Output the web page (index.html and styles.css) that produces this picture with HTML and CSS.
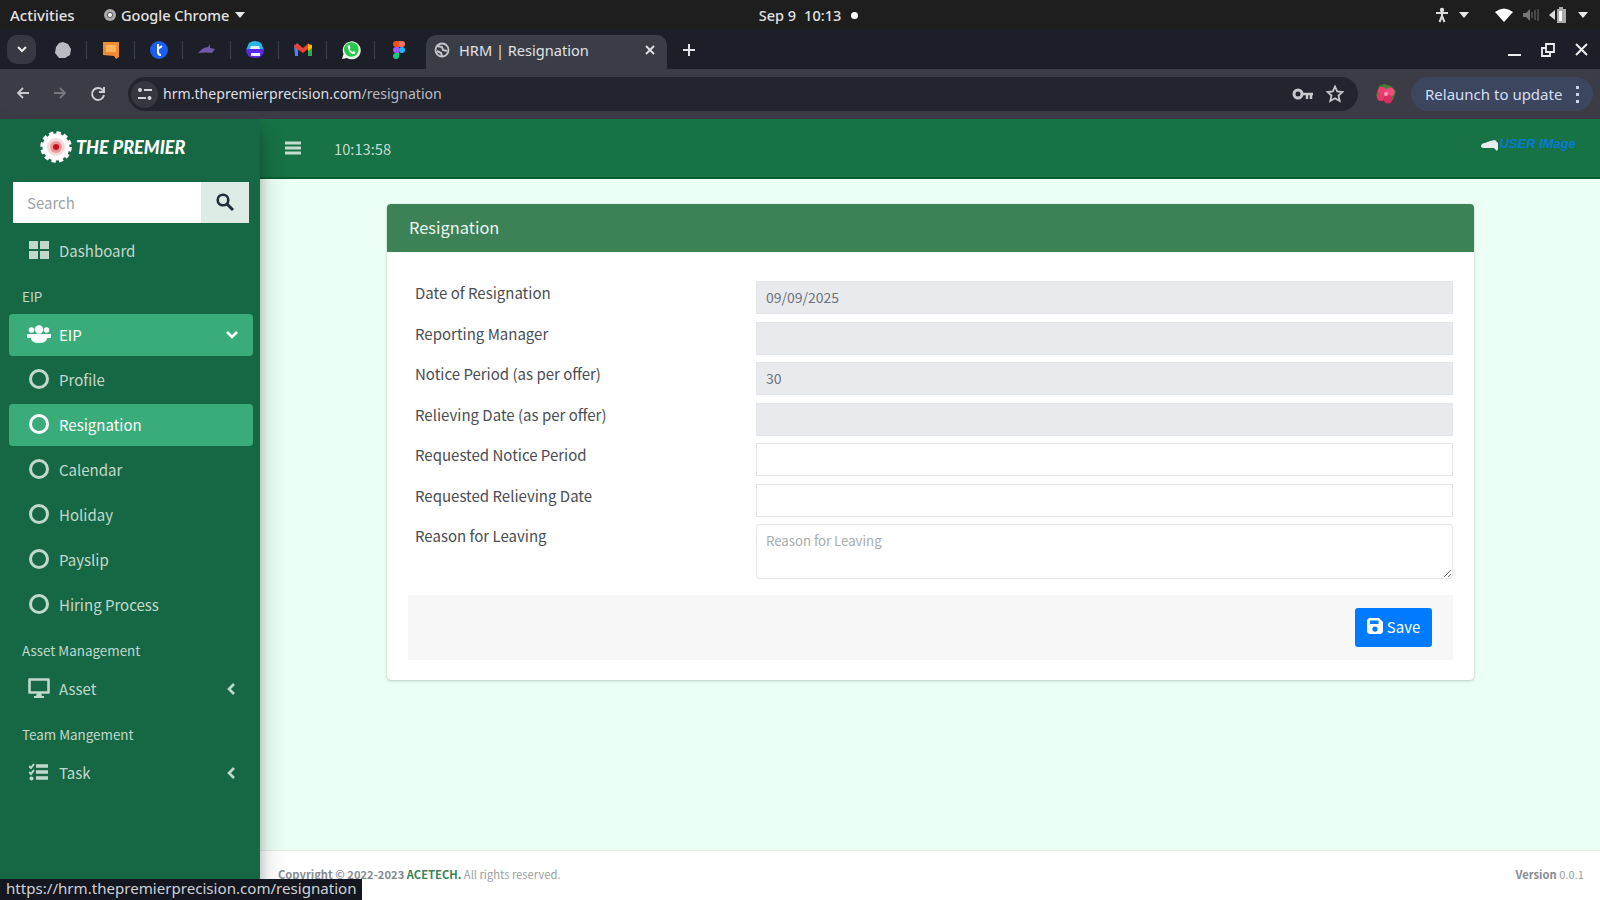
FILE: index.html
```
<!DOCTYPE html>
<html lang="en">
<head>
<meta charset="UTF-8">
<meta name="viewport" content="width=device-width, initial-scale=1.0">
<link rel="stylesheet" href="styles.css">
<title>HRM | Resignation</title>
</head>
<body>

<div class="system-bar">
    <div class="system-left">
        <span class="activities">Activities</span>
        <svg width="14" height="14" viewBox="0 0 14 14"><circle cx="7" cy="7" r="6" fill="#aaa"/><circle cx="7" cy="7" r="2.6" fill="#eee" stroke="#555"/></svg>
        <span class="app-name">Google Chrome</span>
        <i class="caret"></i>
    </div>
    <div class="clock"><span>Sep 9</span><span>10:13</span><i class="dot"></i></div>
    <div class="system-right">
        <svg width="14" height="16" viewBox="0 0 14 16"><circle cx="7" cy="3" r="2.2" fill="#ddd"/><path d="M1 6h12M7 5v5M7 9l-2.5 6M7 9l2.5 6" stroke="#ddd" stroke-width="2" fill="none"/></svg>
        <i class="caret"></i>
        <svg class="wifi" width="18" height="14" viewBox="0 0 18 14"><path d="M0 4Q9-3 18 4L9 14z" fill="#fff"/></svg>
        <svg class="sound" width="16" height="14" viewBox="0 0 16 14"><path d="M0 5h3l4-4v12l-4-4H0z" fill="#777"/><path d="M9 4v6M12 2v10M15 1v12" stroke="#555" stroke-width="1.5"/></svg>
        <svg width="19" height="16" viewBox="0 0 19 16"><path d="M0 8l6-5v10z" fill="#ddd"/><path d="M8 2h2V0h4v2h3v14H8z" fill="#aaa"/><path d="M10 4h3v10h-3z" fill="#fff"/></svg>
        <i class="caret"></i>
    </div>
</div>

<div class="tab-strip">
    <div class="tab-search"><svg width="10" height="7" viewBox="0 0 10 7"><path d="M1 1l4 4 4-4" fill="none" stroke="#eee" stroke-width="2"/></svg></div>
    <div class="pinned-tabs">
        <span class="pinned"><svg width="18" height="18" viewBox="0 0 18 18"><path d="M9 1l5 2 3 5-1 6-5 3H5l-4-5 1-6 3-4z" fill="#b9bbc0"/></svg></span>
        <span class="pinned"><svg width="18" height="18" viewBox="0 0 18 18"><path d="M1 1h16v15l-3 2-2-3-11-1z" fill="#f28a35"/><path d="M4 4h10v7H4z" fill="#ffb45e"/></svg></span>
        <span class="pinned"><svg width="18" height="18" viewBox="0 0 18 18"><circle cx="9" cy="9" r="9" fill="#1c5df2"/><path d="M8 3v8q0 3 3 3M8 8l4-3" stroke="#fff" stroke-width="2" fill="none"/></svg></span>
        <span class="pinned"><svg width="20" height="14" viewBox="0 0 20 14"><path d="M1 10q5-6 10-6l2-3v4l5 1-3 4q-6-1-14 0z" fill="#7157a8"/></svg></span>
        <span class="pinned"><svg width="20" height="18" viewBox="0 0 20 18"><path d="M4 2q6-4 12 0l3 7H1z" fill="#25b8ea"/><path d="M1 8h18q0 9-9 9T1 8z" fill="#572be8"/><path d="M6 5h8l1 3H5zM6 12h9v3H6z" fill="#e9efff"/></svg></span>
        <span class="pinned"><svg width="18" height="14" viewBox="0 0 18 14"><path d="M0 2h4v11H1z" fill="#4285f4"/><path d="M14 2h4v11h-4z" fill="#34a853"/><path d="M0 3l3-3 6 5 6-5v5L9 10 0 4z" fill="#ea4335"/><path d="M14 1l4 1v3l-4 3z" fill="#fbbc04"/></svg></span>
        <span class="pinned"><svg width="20" height="20" viewBox="0 0 20 20"><path d="M1 19l1.5-5A9 9 0 1 1 6 18z" fill="#e9f8eb"/><circle cx="10.300" cy="9.500" r="7.300" fill="#28c64b"/><path d="M6.500 6l2-1 1 3-1 1q1 2 3 3l1-1 2 1-1 2q-5 1-7-8z" fill="#fff"/></svg></span>
        <span class="pinned"><svg width="12" height="18" viewBox="0 0 12 18"><path d="M3 0h3v6H3a3 3 0 0 1 0-6z" fill="#f24e1e"/><path d="M6 0h3a3 3 0 0 1 0 6H6z" fill="#ff7262"/><path d="M3 6h3v6H3a3 3 0 0 1 0-6z" fill="#a259ff"/><circle cx="9" cy="9" r="3" fill="#1abcfe"/><path d="M3 12h3v3a3 3 0 1 1-3-3z" fill="#0acf83"/></svg></span>
    </div>
    <div class="tab">
        <svg width="16" height="16" viewBox="0 0 16 16"><circle cx="8" cy="8" r="6.500" fill="none" stroke="#c5c7ca" stroke-width="1.800"/><path d="M3 4l5 1 1 3 4 1M3 9l4 2 1 3" stroke="#c5c7ca" stroke-width="2" fill="none"/></svg>
        <span class="tab-title">HRM | Resignation</span>
        <svg width="10" height="10" viewBox="0 0 10 10"><path d="M1 1l8 8M9 1L1 9" stroke="#e3e3e6" stroke-width="1.800"/></svg>
    </div>
    <svg class="new-tab" width="12" height="12" viewBox="0 0 12 12"><path d="M6 0v12M0 6h12" stroke="#e3e3e6" stroke-width="2"/></svg>
    <div class="window-buttons">
        <svg width="13" height="14" viewBox="0 0 13 14"><path d="M0 12h13" stroke="#eee" stroke-width="2"/></svg>
        <svg width="14" height="14" viewBox="0 0 14 14"><path d="M5 1h8v8H5zM9 9v4H1V5h4" fill="none" stroke="#eee" stroke-width="1.800"/></svg>
        <svg width="13" height="13" viewBox="0 0 13 13"><path d="M1 1l11 11M12 1L1 12" stroke="#eee" stroke-width="2"/></svg>
    </div>
</div>

<div class="toolbar">
    <div class="nav-buttons">
        <svg width="14" height="14" viewBox="0 0 14 14"><path d="M13 7H2M7 2L2 7l5 5" fill="none" stroke="#c8c9cd" stroke-width="1.800"/></svg>
        <svg width="14" height="14" viewBox="0 0 14 14"><path d="M1 7h11M7 2l5 5-5 5" fill="none" stroke="#777981" stroke-width="1.800"/></svg>
        <svg width="16" height="16" viewBox="0 0 16 16"><path d="M13 4.500A6 6 0 1 0 14 9M9 6h5V1" fill="none" stroke="#d0d1d5" stroke-width="1.900"/></svg>
    </div>
    <div class="omnibox">
        <span class="site-info"><svg width="16" height="14" viewBox="0 0 16 14"><path d="M7 3h8M1 11h8" stroke="#d5d6da" stroke-width="2"/><circle cx="3" cy="3" r="2" fill="#d5d6da"/><circle cx="12.500" cy="11" r="2" fill="#d5d6da"/></svg></span>
        <span class="url"><b>hrm.thepremierprecision.com</b>/resignation</span>
        <svg width="22" height="12" viewBox="0 0 22 12"><circle cx="6" cy="6" r="4" fill="none" stroke="#c8c9cd" stroke-width="3"/><path d="M10 6h11M15 6v5M19 6v5" stroke="#c8c9cd" stroke-width="2.500"/></svg>
        <svg class="star" width="18" height="18" viewBox="0 0 18 18"><path d="M9 1.500l2.200 5 5.300.5-4 3.600 1.200 5.400L9 13.200 4.300 16l1.200-5.400-4-3.600 5.300-.5z" fill="none" stroke="#c8c9cd" stroke-width="1.800"/></svg>
    </div>
    <svg class="profile-pic" width="22" height="22" viewBox="0 0 22 22"><path d="M4 3l5-2 7 2 5 5-3 9H4L1 12z" fill="#4c7b30"/><circle cx="7" cy="8" r="4" fill="#e93f72"/><circle cx="15" cy="9" r="4.500" fill="#f04b7d"/><circle cx="6" cy="14" r="4" fill="#e63a6d"/><circle cx="13" cy="16" r="4.500" fill="#d92e64"/><circle cx="11" cy="11" r="2" fill="#ff9db9"/></svg>
    <div class="relaunch"><span>Relaunch to update</span><svg width="3" height="17" viewBox="0 0 3 17"><path d="M0 0h3v3H0zM0 7h3v3H0zM0 14h3v3H0z" fill="#c9d4ef"/></svg></div>
</div>

<div class="wrapper">
    <aside class="sidebar">
        <div class="brand">
            <svg width="32" height="32" viewBox="0 0 32 32"><circle cx="16" cy="16" r="13.500" fill="#fff"/><circle cx="16" cy="16" r="14" fill="none" stroke="#fff" stroke-width="3.500" stroke-dasharray="4.300 3.030"/><circle cx="16" cy="16" r="9" fill="#f4dada"/><circle cx="16" cy="16" r="6" fill="#e99b9b"/><circle cx="16" cy="16" r="3" fill="#c9101a"/></svg>
            <span>THE PREMIER</span>
        </div>
        <div class="sidebar-search">
            <input type="text" placeholder="Search">
            <button type="button"><svg width="18" height="18" viewBox="0 0 18 18"><circle cx="7" cy="7" r="5.300" fill="none" stroke="#1f2d3d" stroke-width="2.600"/><path d="M11 11l6 6" stroke="#1f2d3d" stroke-width="3"/></svg></button>
        </div>
        <nav>
            <a class="nav-item"><i class="nav-icon"><svg width="20" height="18" viewBox="0 0 20 18"><path d="M0 0h9v8H0zM11 0h9v8h-9zM0 10h9v8H0zM11 10h9v8h-9z" fill="currentColor"/></svg></i><span>Dashboard</span></a>
            <div class="nav-header">EIP</div>
            <a class="nav-item active"><i class="nav-icon"><svg width="24" height="18" viewBox="0 0 24 18"><circle cx="4.500" cy="5" r="2.800" fill="currentColor"/><circle cx="19.500" cy="5" r="2.800" fill="currentColor"/><circle cx="12" cy="4.500" r="4.200" fill="currentColor"/><path d="M0 9h24v4h-4q0 5-8 5t-8-5H0z" fill="currentColor"/></svg></i><span>EIP</span>
                <svg width="12" height="8" viewBox="0 0 12 8"><path d="M1 1l5 5 5-5" fill="none" stroke="currentColor" stroke-width="2.600"/></svg></a>
            <a class="nav-item"><i class="nav-icon circle"></i><span>Profile</span></a>
            <a class="nav-item active"><i class="nav-icon circle"></i><span>Resignation</span></a>
            <a class="nav-item"><i class="nav-icon circle"></i><span>Calendar</span></a>
            <a class="nav-item"><i class="nav-icon circle"></i><span>Holiday</span></a>
            <a class="nav-item"><i class="nav-icon circle"></i><span>Payslip</span></a>
            <a class="nav-item"><i class="nav-icon circle"></i><span>Hiring Process</span></a>
            <div class="nav-header">Asset Management</div>
            <a class="nav-item"><i class="nav-icon"><svg width="22" height="20" viewBox="0 0 22 20"><path d="M1.500 1.500h19v13h-19z" fill="none" stroke="currentColor" stroke-width="2.600" stroke-linejoin="round"/><path d="M9 15h4l1 3h2v2H6v-2h2z" fill="currentColor"/></svg></i><span>Asset</span>
                <svg class="arrow-left" width="8" height="12" viewBox="0 0 8 12"><path d="M7 1L2 6l5 5" fill="none" stroke="currentColor" stroke-width="2.600"/></svg></a>
            <div class="nav-header">Team Mangement</div>
            <a class="nav-item"><i class="nav-icon"><svg width="20" height="18" viewBox="0 0 20 18"><path d="M7 3h12M7 9h12M7 15h12" stroke="currentColor" stroke-width="3.500"/><path d="M0 3l2 2 3-4M0 9l2 2 3-4" fill="none" stroke="currentColor" stroke-width="2"/><circle cx="2.500" cy="15.500" r="2" fill="currentColor"/></svg></i><span>Task</span>
                <svg class="arrow-left" width="8" height="12" viewBox="0 0 8 12"><path d="M7 1L2 6l5 5" fill="none" stroke="currentColor" stroke-width="2.600"/></svg></a>
        </nav>
    </aside>

    <div class="main">
        <header class="navbar">
            <svg width="16" height="14" viewBox="0 0 16 14"><path d="M0 2h16M0 7h16M0 12h16" stroke="#c5dccf" stroke-width="2.800"/></svg>
            <span class="time">10:13:58</span>
            <div class="user">
                <svg width="18" height="14" viewBox="0 0 18 14"><path d="M0 10q0-4 4-4l5-2 5-1 3 3v6l-1 2-3-3H2z" fill="#e8eef0"/></svg>
                <span>USER IMage</span>
            </div>
        </header>

        <main class="content">
            <form class="card">
                <div class="card-header">Resignation</div>
                <div class="card-body">
                    <div class="form-row"><label>Date of Resignation</label><input type="text" value="09/09/2025" disabled></div>
                    <div class="form-row"><label>Reporting Manager</label><input type="text" disabled></div>
                    <div class="form-row"><label>Notice Period (as per offer)</label><input type="text" value="30" disabled></div>
                    <div class="form-row"><label>Relieving Date (as per offer)</label><input type="text" disabled></div>
                    <div class="form-row"><label>Requested Notice Period</label><input type="text"></div>
                    <div class="form-row"><label>Requested Relieving Date</label><input type="text"></div>
                    <div class="form-row"><label>Reason for Leaving</label><textarea placeholder="Reason for Leaving"></textarea></div>
                    <div class="card-footer">
                        <button type="button" class="save"><svg width="16" height="16" viewBox="0 0 16 16"><path fill-rule="evenodd" d="M2 0h10l4 4v10l-2 2H2l-2-2V2zM3 2.500V6h8.500V2.500zM8 8.500a2.600 2.600 0 1 0 .01 0z" fill="#fff"/></svg><span>Save</span></button>
                    </div>
                </div>
            </form>
        </main>

        <footer class="footer">
            <div><b>Copyright © 2022-2023 <span class="company">ACETECH.</span></b> All rights reserved.</div>
            <div><b>Version</b> 0.0.1</div>
        </footer>
    </div>
</div>

<div class="status-url">https://hrm.thepremierprecision.com/resignation</div>

</body>
</html>
```
FILE: styles.css
```
* {
    box-sizing: border-box;
}

body {
    margin: 0;
    width: 1600px;
    height: 900px;
    overflow: hidden;
    display: flex;
    flex-direction: column;
    font-family: "Noto Sans CJK JP", "Noto Sans", sans-serif;
    font-size: 15px;
    color: #212529;
}

svg {
    display: block;
    flex: none;
}

input, textarea, button {
    font-family: inherit;
}

/* Desktop bar */
.system-bar {
    height: 30px;
    background-color: #1e1e1e;
    color: #e2e2e2;
    display: grid;
    grid-template-columns: 1fr auto 1fr;
    align-items: center;
    padding: 0 12px 0 10px;
    font: 500 14.5px/28px "Noto Sans", sans-serif;
}

.system-left, .system-right, .clock {
    display: flex;
    align-items: center;
}

.activities {
    width: 93px;
    font-size: 15px;
}

.app-name {
    margin: 0 6px 0 4px;
}

.clock {
    gap: 8px;
    padding-left: 19px;
}

.dot {
    width: 7px;
    height: 7px;
    margin-left: 2px;
    border-radius: 50%;
    background-color: #fff;
}

.caret {
    border: 5px solid transparent;
    border-top: 6px solid #e8e8e8;
    border-bottom: 0;
}

.system-right {
    justify-content: flex-end;
    gap: 10px;
}

.wifi {
    margin-left: 16px;
}

/* Browser tabs */
.tab-strip {
    height: 39px;
    background-color: #1c1f28;
    display: flex;
    align-items: center;
    padding: 0 12px 0 7px;
}

.tab-search {
    width: 29px;
    height: 29px;
    border-radius: 10px;
    background-color: #373942;
    display: flex;
    align-items: center;
    justify-content: center;
}

.pinned-tabs {
    display: flex;
    width: 390px;
    padding-left: 3px;
}

.pinned {
    width: 48px;
    height: 18px;
    display: flex;
    align-items: center;
    justify-content: center;
    border-right: 1px solid #3d404a;
}

.pinned:last-child {
    border-right: 0;
}

.tab {
    width: 241px;
    height: 34px;
    margin-top: 5px;
    padding: 0 12px 5px 8px;
    border-radius: 10px 10px 0 0;
    background-color: #3b3d46;
    display: flex;
    align-items: center;
}

.tab-title {
    flex: 1;
    margin-left: 9px;
    color: #e0e1e4;
    font: 14.6px/24px "Noto Sans", sans-serif;
}

.new-tab {
    margin-left: 16px;
}

.window-buttons {
    margin-left: auto;
    display: flex;
    gap: 20px;
}

/* Address bar */
.toolbar {
    height: 50px;
    background-color: #3b3c45;
    display: flex;
    align-items: center;
    padding: 0 7px 0 16px;
    font: 15px/20px "Noto Sans", sans-serif;
}

.nav-buttons {
    width: 112px;
    display: flex;
    gap: 23px;
}

.omnibox {
    width: 1230px;
    height: 34px;
    border-radius: 17px;
    background-color: #23252e;
    display: flex;
    align-items: center;
    padding: 0 14px 0 3px;
}

.site-info {
    width: 27px;
    height: 27px;
    border-radius: 50%;
    background-color: #363841;
    display: flex;
    align-items: center;
    justify-content: center;
}

.url {
    flex: 1;
    margin-left: 5px;
    font-size: 14.1px;
    color: #b9bac0;
}

.url b {
    font-weight: 400;
    color: #dedfe3;
}

.star {
    margin-left: 12px;
}

.profile-pic {
    margin-left: 17px;
}

.relaunch {
    margin-left: auto;
    width: 182px;
    height: 34px;
    border-radius: 17px;
    background-color: #3c465f;
    color: #d5dff5;
    display: flex;
    align-items: center;
    justify-content: space-between;
    padding: 0 14px;
    white-space: nowrap;
}

/* Page */
.wrapper {
    flex: 1;
    display: flex;
    min-height: 0;
}

.sidebar {
    width: 260px;
    background-color: #166844;
    box-shadow: 0 14px 28px rgba(0,0,0,0.2), 0 10px 10px rgba(0,0,0,0.2);
    position: relative;
    z-index: 1;
    color: #c2d8cd;
}

.brand {
    height: 63px;
    padding: 0 0 8px 40px;
    display: flex;
    align-items: center;
    gap: 4px;
}

.brand span {
    color: #fff;
    font: italic 900 18px/24px Lato, sans-serif;
}

.sidebar-search {
    margin: 0 11px 0 13px;
    height: 41px;
    display: flex;
}

.sidebar-search input {
    width: 188px;
    border: 0;
    padding: 0 14px;
    font-size: 15px;
    background-color: #fff;
}

.sidebar-search input::placeholder {
    color: #9da3a8;
}

.sidebar-search button {
    flex: 1;
    border: 0;
    padding: 0 0 2px;
    background-color: #dcebe4;
    display: flex;
    align-items: center;
    justify-content: center;
}

nav {
    padding: 7px 7px 0 9px;
}

.nav-item {
    height: 42px;
    margin-bottom: 3px;
    padding: 0 15px 0 20px;
    border-radius: 4px;
    display: flex;
    align-items: center;
    line-height: 24px;
}

.nav-icon {
    width: 20px;
    height: 20px;
    margin-top: -3px;
    display: flex;
    align-items: center;
    justify-content: center;
}

.nav-item span {
    flex: 1;
    margin-left: 10px;
}

.nav-item.active {
    background-color: #3aac7a;
    color: #fff;
}

.circle {
    border: 3px solid currentColor;
    border-radius: 50%;
}

.arrow-left {
    margin-right: 3px;
}

.nav-header {
    height: 39px;
    padding: 8px 0 0 13px;
    font-size: 13.4px;
    line-height: 26px;
}

.main {
    flex: 1;
    display: flex;
    flex-direction: column;
}

.navbar {
    height: 60px;
    background-color: #177245;
    border-bottom: 2px solid #075f2d;
    padding: 0 24px 0 25px;
    display: flex;
    align-items: center;
    color: #c5dccf;
}

.time {
    margin-left: 33px;
    font-size: 14.7px;
}

.user {
    margin-left: auto;
    display: flex;
    align-items: center;
    color: #087bd0;
    font: italic bold 13px/16px "Liberation Sans", sans-serif;
    padding-bottom: 8px;
}

.content {
    flex: 1;
    background-color: #ecfff4;
    padding: 25px 126px 0 127px;
}

.card {
    height: 476px;
    background-color: #fff;
    border-radius: 4px;
    box-shadow: 0 0 1px rgba(0,0,0,0.125), 0 1px 3px rgba(0,0,0,0.2);
}

.card-header {
    height: 48px;
    padding: 0 22px;
    background-color: #3c8256;
    border-radius: 4px 4px 0 0;
    color: #eef6f0;
    font-size: 16.4px;
    line-height: 46px;
}

.card-body {
    padding: 29px 21px 0;
}

.form-row {
    display: flex;
    margin-bottom: 7.5px;
}

.form-row label {
    width: 348px;
    padding-left: 7px;
    font-size: 15px;
    line-height: 24px;
    color: #4a4d52;
}

.form-row input, .form-row textarea {
    width: 697px;
    height: 33px;
    margin: 0;
    border: 1px solid #e3e6e9;
    padding: 0 9px 1px;
    font-size: 14px;
    color: #6c747c;
    background-color: #fff;
}

.form-row input:disabled {
    background-color: #e8eaed;
}

.form-row textarea {
    height: 55px;
    padding-top: 5px;
    font-size: 13.2px;
    line-height: 22px;
    border-radius: 3px;
}

.form-row textarea::placeholder {
    color: #a5abb0;
}

.card-footer {
    height: 65px;
    margin-top: 16px;
    padding: 13px 21px;
    background-color: #f7f7f7;
    display: flex;
    justify-content: flex-end;
}

.save {
    width: 77px;
    height: 39px;
    padding: 0 0 3px;
    border: 0;
    border-radius: 3px;
    background-color: #007bff;
    color: #fff;
    font-size: 15px;
    display: flex;
    align-items: center;
    justify-content: center;
    gap: 4px;
}

.footer {
    height: 50px;
    border-top: 1px solid #e4eae8;
    padding: 0 16px 4px 18px;
    background-color: #fff;
    color: #9a9fa5;
    display: flex;
    justify-content: space-between;
    align-items: center;
    font-size: 11.2px;
}

.footer b {
    color: #858b92;
}

.footer .company {
    color: #3c8256;
}

/* Link preview in the window corner */
.status-url {
    position: absolute;
    left: 0;
    bottom: 0;
    z-index: 2;
    width: 362px;
    height: 21px;
    padding-left: 6px;
    background-color: #141720;
    color: #cfd1d8;
    font: 15.1px/19px "Noto Sans", sans-serif;
    white-space: nowrap;
}
```
